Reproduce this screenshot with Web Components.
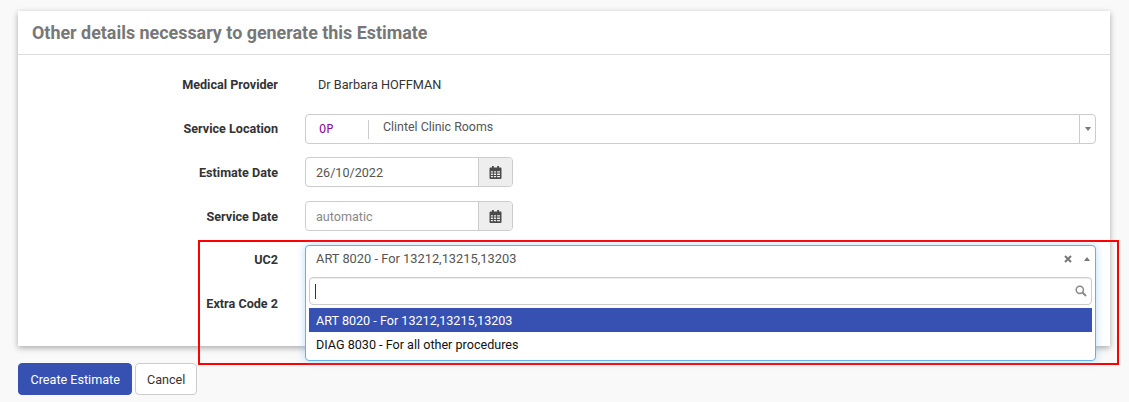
<!DOCTYPE html>
<html>
<head>
<meta charset="utf-8">
<style>
  html, body { margin: 0; background: #f9f9f9; }
  body { font-family: Roboto, "Liberation Sans", sans-serif; font-size: 12.6px; color: #333; }
</style>
</head>
<body>
<estimate-page>
  <detail-card heading="Other details necessary to generate this Estimate">
    <form-row label="Medical Provider" style="margin-bottom:1px"><span style="padding-left:13px;font-size:12.7px">Dr Barbara HOFFMAN</span></form-row>
    <form-row label="Service Location"><location-select code="OP" name="Clintel Clinic Rooms"></location-select></form-row>
    <form-row label="Estimate Date"><date-input value="26/10/2022"></date-input></form-row>
    <form-row label="Service Date"><date-input placeholder="automatic"></date-input></form-row>
    <form-row label="UC2">
      <open-select value="ART 8020 - For 13212,13215,13203">
        <select-option selected>ART 8020 - For 13212,13215,13203</select-option>
        <select-option>DIAG 8030 - For all other procedures</select-option>
      </open-select>
    </form-row>
    <form-row label="Extra Code 2"></form-row>
  </detail-card>
  <div slot="actions">
    <app-button primary>Create Estimate</app-button>
    <app-button>Cancel</app-button>
  </div>
</estimate-page>

<script>
const CALENDAR_ICON = `<svg width="13" height="13" viewBox="0 0 13 13" aria-hidden="true">
  <path fill="#4a4a4a" fill-rule="evenodd" d="M3 0h1.800v1.500H8.200V0H10v1.500h1.600c.5 0 .9.4.9.9v9.700c0 .5-.4.9-.9.9H1.400c-.5 0-.9-.4-.9-.9V2.400c0-.5.4-.9.9-.9H3zM1.900 5.200v1.400h2v-1.400zm3 0v1.400h2.200v-1.400zm3.200 0v1.400h2.900v-1.400zM1.900 7.600v1.300h2V7.600zm3 0v1.300h2.200V7.600zm3.200 0v1.300h2.900V7.600zM1.900 9.900v1.400h2V9.900zm3 0v1.400h2.200V9.900zm3.200 0v1.400h2.900V9.900z"/>
</svg>`;

class EstimatePage extends HTMLElement {
  constructor() {
    super();
    this.attachShadow({ mode: "open" });
    this.shadowRoot.innerHTML = `
      <style>
        :host { display: block; position: relative; width: 1129px; height: 402px; overflow: hidden; box-sizing: border-box; padding: 11px 19px 0 18px; }
        .actions { display: flex; gap: 3px; margin-top: 17px; }
        .mark { position: absolute; left: 198px; top: 240px; width: 921px; height: 125px; box-sizing: border-box; border: 2px solid #f00; pointer-events: none; }
      </style>
      <slot></slot>
      <div class="actions"><slot name="actions"></slot></div>
      <div class="mark"></div>
    `;
  }
}

class DetailCard extends HTMLElement {
  constructor() {
    super();
    this.attachShadow({ mode: "open" });
    this.shadowRoot.innerHTML = `
      <style>
        :host { display: block; height: 335px; box-sizing: border-box; background: #fff; box-shadow: 0 2px 6px rgba(0,0,0,.32); }
        h2 { margin: 0; height: 44px; box-sizing: border-box; padding: 0 14px; border-bottom: 1px solid #ddd; font-size: 17.9px; line-height: 43px; font-weight: 700; color: #777; }
        .body { display: flex; flex-direction: column; gap: 13.700px; padding: 14px 14px 0 0; }
      </style>
      <h2></h2>
      <div class="body"><slot></slot></div>
    `;
    this.shadowRoot.querySelector("h2").textContent = this.getAttribute("heading");
  }
}

class FormRow extends HTMLElement {
  constructor() {
    super();
    this.attachShadow({ mode: "open" });
    this.shadowRoot.innerHTML = `
      <style>
        :host { display: flex; align-items: center; height: 30px; }
        label { width: 260px; flex: none; text-align: right; font-weight: 700; color: #333; }
        .field { flex: 1; margin-left: 27px; min-width: 0; }
      </style>
      <label></label>
      <div class="field"><slot></slot></div>
    `;
    this.shadowRoot.querySelector("label").textContent = this.getAttribute("label");
  }
}

class LocationSelect extends HTMLElement {
  constructor() {
    super();
    this.attachShadow({ mode: "open" });
    this.shadowRoot.innerHTML = `
      <style>
        :host { display: flex; height: 30px; box-sizing: border-box; border: 1px solid #ccc; border-radius: 4px; background: #fff; }
        .code { width: 62px; padding-left: 13px; box-sizing: border-box; font-family: "DejaVu Sans Mono", "Liberation Mono", monospace; font-size: 12px; color: #8a0f9a; line-height: 29px; }
        .value { flex: 1; color: #555; }
        .value span { display: block; padding-left: 14px; border-left: 1px solid #ccc; height: 19px; line-height: 14px; margin-top: 5px; font-size: 12.4px; }
        .arrow { width: 15px; border-left: 1px solid #ccc; display: flex; align-items: center; justify-content: center; }
        .arrow i { width: 0; height: 0; border: 3px solid transparent; border-top: 4px solid #777; border-bottom: 0; }
      </style>
      <div class="code"></div>
      <div class="value"><span></span></div>
      <div class="arrow"><i></i></div>
    `;
    this.shadowRoot.querySelector(".code").textContent = this.getAttribute("code");
    this.shadowRoot.querySelector(".value span").textContent = this.getAttribute("name");
  }
}

class DateInput extends HTMLElement {
  constructor() {
    super();
    this.attachShadow({ mode: "open" });
    this.shadowRoot.innerHTML = `
      <style>
        :host { display: flex; width: 208px; height: 30px; box-sizing: border-box; border: 1px solid #ccc; border-radius: 4px; background: #fff; overflow: hidden; }
        .text { flex: 1; padding-left: 10px; line-height: 29px; color: #555; }
        .text.empty { color: #888; }
        .addon { width: 33px; flex: none; border-left: 1px solid #ccc; background: #eee; display: flex; align-items: center; justify-content: center; }
      </style>
      <div class="text"></div>
      <div class="addon">${CALENDAR_ICON}</div>
    `;
    const text = this.shadowRoot.querySelector(".text");
    text.textContent = this.getAttribute("value") || this.getAttribute("placeholder");
    text.classList.toggle("empty", !this.hasAttribute("value"));
  }
}

class OpenSelect extends HTMLElement {
  constructor() {
    super();
    this.attachShadow({ mode: "open" });
    this.shadowRoot.innerHTML = `
      <style>
        :host { display: block; position: relative; height: 30px; }
        .box { position: absolute; left: 0; right: 0; top: 0; height: 116px; box-sizing: border-box; z-index: 2; background: #fff; border: 1px solid #66afe9; border-radius: 4px; box-shadow: 0 0 8px rgba(102,175,233,.45); }
        .head { display: flex; align-items: center; height: 26px; padding: 0 5px 0 10px; color: #555; font-size: 12.85px; }
        .head span { flex: 1; }
        .clear { width: 8px; height: 8px; margin-right: 12px; }
        .up { width: 0; height: 0; border: 3px solid transparent; border-bottom: 4px solid #777; border-top: 0; }
        .search { display: flex; align-items: center; height: 28px; box-sizing: border-box; margin: 5.500px 3px 3px; border: 1px solid #ccc; border-radius: 4px; padding: 0 4px 0 5px; box-shadow: inset 0 1px 1px rgba(0,0,0,.075); }
        .caret { width: 1px; height: 15px; background: #333; }
        .search svg { margin-left: auto; }
        .list { margin: 0 3px; }
      </style>
      <div class="box">
        <div class="head">
          <span></span>
          <svg class="clear" viewBox="0 0 8 8"><path d="M1 1l6 6M7 1L1 7" stroke="#777" stroke-width="2"/></svg>
          <i class="up"></i>
        </div>
        <div class="search">
          <div class="caret"></div>
          <svg width="12" height="12" viewBox="0 0 12 12"><circle cx="4.800" cy="4.800" r="3.600" fill="none" stroke="#888" stroke-width="1.500"/><path d="M7.500 7.500L11 11" stroke="#888" stroke-width="2"/></svg>
        </div>
        <div class="list"><slot></slot></div>
      </div>
    `;
    this.shadowRoot.querySelector(".head span").textContent = this.getAttribute("value");
  }
}

class SelectOption extends HTMLElement {
  constructor() {
    super();
    this.attachShadow({ mode: "open" });
    this.shadowRoot.innerHTML = `
      <style>
        :host { display: block; height: 24px; line-height: 26px; padding: 0 7px; color: #111; }
        :host([selected]) { background: #3751b3; color: #fff; }
      </style>
      <slot></slot>
    `;
  }
}

class AppButton extends HTMLElement {
  constructor() {
    super();
    this.attachShadow({ mode: "open" });
    this.shadowRoot.innerHTML = `
      <style>
        :host { display: inline-block; height: 32px; box-sizing: border-box; padding: 0 10.500px; line-height: 31px; border: 1px solid #ccc; border-radius: 4px; background: #fff; color: #333; }
        :host([primary]) { padding: 0 11.500px; background: #3751b3; border-color: #3751b3; color: #fff; }
      </style>
      <slot></slot>
    `;
  }
}

customElements.define("estimate-page", EstimatePage);
customElements.define("detail-card", DetailCard);
customElements.define("form-row", FormRow);
customElements.define("location-select", LocationSelect);
customElements.define("date-input", DateInput);
customElements.define("open-select", OpenSelect);
customElements.define("select-option", SelectOption);
customElements.define("app-button", AppButton);
</script>
</body>
</html>
